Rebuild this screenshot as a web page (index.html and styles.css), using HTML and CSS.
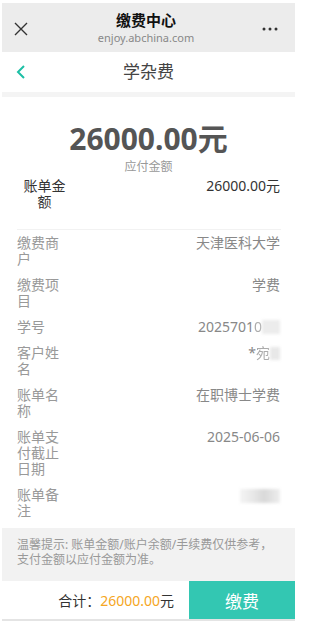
FILE: index.html
```html
<!DOCTYPE html>
<html lang="zh">
<head>
<meta charset="utf-8">
<title>学杂费</title>
<link rel="stylesheet" href="styles.css">
</head>
<body>
<div class="phone">
  <header class="topbar">
    <svg class="close" width="14" height="14" viewBox="0 0 14 14"><path d="M1 1L13 13M13 1L1 13" stroke="#333" stroke-width="1.4" fill="none"/></svg>
    <div class="top-title">
      <div class="top-name">缴费中心</div>
      <div class="top-url">enjoy.abchina.com</div>
    </div>
    <svg class="more" width="16" height="4" viewBox="0 0 16 4"><circle cx="2" cy="2" r="1.5" fill="#333"/><circle cx="8" cy="2" r="1.5" fill="#333"/><circle cx="14" cy="2" r="1.5" fill="#333"/></svg>
  </header>
  <nav class="navbar">
    <svg class="back" width="10" height="14" viewBox="0 0 10 14"><path d="M8 1L2 7L8 13" stroke="#1cbfa5" stroke-width="2" fill="none"/></svg>
    <div class="nav-title">学杂费</div>
  </nav>
  <div class="strip"></div>
  <section class="summary">
    <div class="big-amount">26000.00元</div>
    <div class="big-label">应付金额</div>
    <div class="bill-row">
      <div class="bill-label">账单金额</div>
      <div class="bill-value">26000.00元</div>
    </div>
  </section>
  <div class="sep"></div>
  <section class="details">
    <div class="row"><div class="label">缴费商户</div><div class="value">天津医科大学</div></div>
    <div class="row"><div class="label">缴费项目</div><div class="value">学费</div></div>
    <div class="row"><div class="label">学号</div><div class="value">2025701<span class="part">0</span><span class="blur b1"></span></div></div>
    <div class="row"><div class="label">客户姓名</div><div class="value">*<span class="part">宛</span><span class="blur b2"></span></div></div>
    <div class="row"><div class="label">账单名称</div><div class="value">在职博士学费</div></div>
    <div class="row"><div class="label">账单支付截止日期</div><div class="value">2025-06-06</div></div>
    <div class="row"><div class="label">账单备注</div><div class="value"><span class="blur b3"></span></div></div>
  </section>
  <div class="tip">温馨提示: 账单金额/账户余额/手续费仅供参考，支付金额以应付金额为准。</div>
  <footer class="footer">
    <div class="total">合计：<span class="total-num">26000.00</span>元</div>
    <button class="pay">缴费</button>
  </footer>
  <div class="bottom-line"></div>
</div>
</body>
</html>
```
FILE: styles.css
```css
html, body {
  margin: 0;
  padding: 0;
  background: #fff;
}
body {
  font-family: "Noto Sans", "Noto Sans CJK SC", sans-serif;
  color: #333;
}
.phone {
  width: 293px;
  margin: 3px 0 0 2px;
}
.topbar {
  height: 49px;
  background: #ececec;
  display: flex;
  align-items: center;
  padding: 0 17px 0 12px;
  box-sizing: border-box;
}
.close {
  display: block;
  margin-top: 3px;
}
.top-title {
  flex: 1;
  text-align: center;
  margin-left: 2px;
}
.top-name {
  font-size: 15px;
  font-weight: 700;
  line-height: 19px;
  color: #111;
}
.top-url {
  font-size: 11px;
  line-height: 14px;
  color: #888;
  margin-top: 1px;
}
.more {
  display: block;
  margin-top: 2px;
}
.navbar {
  height: 40px;
  background: #fff;
  display: flex;
  align-items: center;
  padding: 0 0 0 14px;
  box-sizing: border-box;
}
.back {
  display: block;
}
.nav-title {
  flex: 1;
  text-align: center;
  font-size: 17px;
  color: #444;
  margin-right: 24px;
  line-height: 20px;
}
.strip {
  height: 5px;
  background: #f4f4f4;
}
.summary {
  padding: 22px 15px 0 21px;
}
.big-amount {
  text-align: center;
  font-size: 30px;
  font-weight: 700;
  line-height: 40px;
  color: #555;
  margin-left: -6px;
}
.big-label {
  text-align: center;
  font-size: 12px;
  line-height: 16px;
  color: #999;
  margin-left: -6px;
}
.bill-row {
  display: flex;
  justify-content: space-between;
  align-items: flex-start;
  margin-top: 3px;
  font-size: 14px;
  line-height: 16px;
}
.bill-label {
  width: 43px;
  text-align: center;
  color: #333;
}
.bill-value {
  color: #333;
}
.sep {
  height: 1px;
  background: #f2f2f2;
  margin: 19px 14px 0 15px;
}
.details {
  padding: 5px 15px 3px 15px;
}
.row {
  display: flex;
  justify-content: space-between;
  align-items: flex-start;
  font-size: 14px;
  line-height: 16px;
  margin-bottom: 10px;
}
.row:last-child {
  margin-bottom: 0;
}
.label {
  width: 43px;
  color: #999;
}
.value {
  color: #888;
  text-align: right;
  display: flex;
  align-items: center;
}
.part {
  opacity: 0.7;
}
.blur {
  display: inline-block;
  background: #e8e8e8;
  filter: blur(1.5px);
}
.b1 {
  width: 18px;
  height: 14px;
  background: #ececec;
}
.b2 {
  width: 10px;
  height: 13px;
}
.b3 {
  width: 40px;
  height: 14px;
  background: linear-gradient(90deg, #f4f4f4, #e4e4e4 40%, #d8d8d8 60%, #eee);
  margin-top: 2px;
}
.tip {
  background: #f2f2f2;
  margin-top: 6px;
  padding: 9px 15px 14px 15px;
  font-size: 12px;
  line-height: 15px;
  color: #999;
}
.footer {
  height: 38px;
  display: flex;
  align-items: stretch;
  background: #fff;
}
.total {
  flex: 1;
  display: flex;
  align-items: center;
  justify-content: flex-end;
  padding-right: 15px;
  font-size: 14px;
  color: #333;
}
.total-num {
  color: #f5a623;
}
.pay {
  width: 106px;
  border: 0;
  background: #33c7b2;
  color: #fff;
  font-family: "Noto Sans CJK SC", sans-serif;
  font-size: 17px;
  padding: 0;
}
.bottom-line {
  height: 2px;
  background: #e4e4e4;
}
```
